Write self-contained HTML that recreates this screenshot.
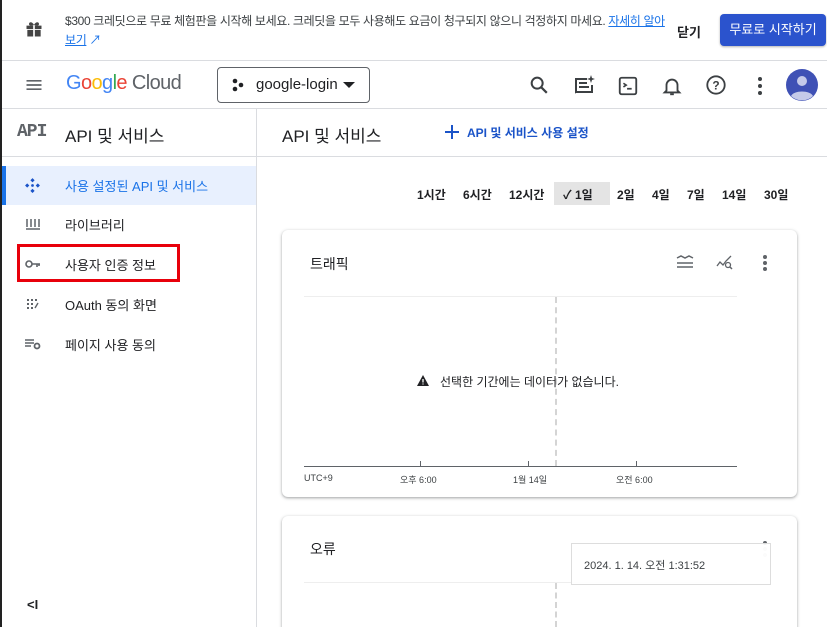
<!DOCTYPE html>
<html style="overflow:hidden;width:827px;height:627px"><head><meta charset="utf-8"><style>
*{box-sizing:border-box;margin:0;padding:0}
body{width:827px;height:627px;overflow:hidden;background:#fff;font-family:"Liberation Sans","Noto Sans CJK KR",sans-serif;color:#202124;position:relative}
.a{position:absolute}
.t{white-space:nowrap}
</style></head><body>
<div class="a" style="left:0;top:0;width:2px;height:627px;background:#222"></div>
<!-- banner -->
<svg class="a" style="left:24px;top:19px" width="20" height="20" viewBox="0 0 24 24"><path fill="#444" d="M3 8h18v4H3zM4 13h16v8H4z"/><path fill="#444" d="M12 7c-2-4-6-4-6-1s4 2 6 1zm0 0c2-4 6-4 6-1s-4 2-6 1z"/><path fill="#fff" d="M11 8h2v13h-2z"/></svg>
<div class="a t" style="left:65px;top:12px;font-size:12px;color:#3c4043;line-height:19px;letter-spacing:-0.35px">$300 크레딧으로 무료 체험판을 시작해 보세요. 크레딧을 모두 사용해도 요금이 청구되지 않으니 걱정하지 마세요. <span style="color:#1a73e8;text-decoration:underline">자세히 알아</span><br><span style="color:#1a73e8;text-decoration:underline">보기</span> <span style="color:#1a73e8">↗</span></div>
<div class="a t" style="left:677px;top:22px;font-size:13px;color:#202124;font-weight:bold">닫기</div>
<div class="a t" style="left:720px;top:14px;width:106px;height:32px;background:#2b53cd;border-radius:4px;color:#fff;font-size:13px;line-height:32px;text-align:center;box-shadow:0 1px 2px rgba(0,0,0,.3)">무료로 시작하기</div>
<div class="a" style="left:2px;top:60px;width:825px;height:1px;background:#dadce0"></div>
<!-- header -->
<svg class="a" style="left:24px;top:75px" width="20" height="20" viewBox="0 0 24 24"><path fill="#5f6368" d="M3 6h18v2H3zm0 5h18v2H3zm0 5h18v2H3z"/></svg>
<div class="a t" style="left:66px;top:72px;font-size:20px;letter-spacing:-0.6px"><span style="color:#4285f4">G</span><span style="color:#ea4335">o</span><span style="color:#fbbc05">o</span><span style="color:#4285f4">g</span><span style="color:#34a853">l</span><span style="color:#ea4335">e</span> <span style="color:#5f6368">Cloud</span></div>
<div class="a" style="left:217px;top:67px;width:153px;height:36px;border:1px solid #5f6368;border-radius:4px"></div>
<svg class="a" style="left:231px;top:78px" width="14" height="14" viewBox="0 0 14 14"><circle cx="4" cy="3" r="2.3" fill="#202124"/><circle cx="10" cy="7" r="2.3" fill="#202124"/><circle cx="4" cy="11" r="2.3" fill="#202124"/></svg>
<div class="a t" style="left:256px;top:76px;font-size:15px;color:#202124">google-login</div>
<svg class="a" style="left:342px;top:81px" width="14" height="8"><path d="M1 1h12L7 7z" fill="#202124"/></svg>
<svg class="a" style="left:528px;top:74px" width="22" height="22" viewBox="0 0 24 24"><circle cx="10" cy="10" r="6" stroke="#3c4043" stroke-width="2.2" fill="none"/><path d="M14.5 14.5l6 6" stroke="#3c4043" stroke-width="2.4"/></svg>
<svg class="a" style="left:572px;top:74px" width="24" height="24" viewBox="0 0 24 24"><path d="M3 4h12v2H5v11l-2 3z" fill="#3c4043"/><path d="M3 17h16V11h2v8H3z" fill="#3c4043"/><path d="M7 8h8v2H7zm0 4h10v2H7z" fill="#3c4043"/><path d="M19 1l1 3 3 1-3 1-1 3-1-3-3-1 3-1z" fill="#3c4043"/></svg>
<svg class="a" style="left:617px;top:75px" width="22" height="22" viewBox="0 0 24 24"><rect x="3" y="3" width="18" height="18" rx="2" stroke="#3c4043" stroke-width="2" fill="none"/><path d="M7 9l3 2-3 2M11 15h5" stroke="#3c4043" stroke-width="1.8" fill="none"/></svg>
<svg class="a" style="left:661px;top:74px" width="22" height="24" viewBox="0 0 24 24"><path d="M6 17V11a6 6 0 0112 0v6l2 2H4z" stroke="#3c4043" stroke-width="2" fill="none"/><path d="M10 21h4" stroke="#3c4043" stroke-width="2"/></svg>
<svg class="a" style="left:705px;top:74px" width="22" height="22" viewBox="0 0 24 24"><circle cx="12" cy="12" r="9.5" stroke="#3c4043" stroke-width="2" fill="none"/><text x="12" y="17" text-anchor="middle" font-size="13" font-weight="bold" fill="#3c4043" font-family="Liberation Sans">?</text></svg>
<svg class="a" style="left:756px;top:75px" width="8" height="22"><circle cx="4" cy="4" r="2" fill="#3c4043"/><circle cx="4" cy="11" r="2" fill="#3c4043"/><circle cx="4" cy="18" r="2" fill="#3c4043"/></svg>
<svg class="a" style="left:786px;top:69px" width="32" height="32" viewBox="0 0 32 32"><circle cx="16" cy="16" r="16" fill="#3f51b5"/><circle cx="16" cy="12" r="5" fill="#c5cae9"/><path d="M5 27c3-6 19-6 22 0a16 16 0 01-22 0z" fill="#c5cae9"/></svg>
<div class="a" style="left:2px;top:108px;width:825px;height:1px;background:#dadce0"></div>
<!-- sidebar -->
<div class="a" style="left:256px;top:108px;width:1px;height:519px;background:#dadce0"></div>
<div class="a t" style="left:17px;top:122px;font-size:18px;font-family:'Liberation Mono',monospace;font-weight:bold;color:#5f6368;letter-spacing:-1px">API</div>
<div class="a t" style="left:65px;top:122px;font-size:17px">API 및 서비스</div>
<div class="a" style="left:2px;top:156px;width:255px;height:1px;background:#dadce0"></div>
<div class="a" style="left:2px;top:166px;width:254px;height:39px;background:#e8f0fe"></div>
<div class="a" style="left:2px;top:166px;width:4px;height:39px;background:#1a73e8"></div>
<svg class="a" style="left:24px;top:177px" width="17" height="17" viewBox="0 0 16 16"><path d="M8 1l2 2-2 2-2-2zM8 11l2 2-2 2-2-2zM1 8l2-2 2 2-2 2zM11 8l2-2 2 2-2 2z" fill="#1a53c8"/><circle cx="8" cy="8" r="1.3" fill="#1a53c8"/></svg>
<div class="a t" style="left:65px;top:176px;font-size:13px;color:#1a73e8">사용 설정된 API 및 서비스</div>
<svg class="a" style="left:26px;top:217px" width="14" height="14"><path d="M1 2v8M5 2v8M9 2v8M13 2v8M0 12h14" stroke="#5f6368" stroke-width="1.5"/></svg>
<div class="a t" style="left:65px;top:215px;font-size:13px">라이브러리</div>
<div class="a" style="left:17px;top:244px;width:163px;height:38px;border:3px solid #e8000b"></div>
<svg class="a" style="left:25px;top:259px" width="16" height="10"><circle cx="4" cy="5" r="3" stroke="#5f6368" stroke-width="1.6" fill="none"/><path d="M7 5h8M12 5v3M14 5v2" stroke="#5f6368" stroke-width="1.6"/></svg>
<div class="a t" style="left:65px;top:255px;font-size:13px">사용자 인증 정보</div>
<svg class="a" style="left:26px;top:298px" width="14" height="12"><g fill="#5f6368"><rect x="1" y="1" width="2" height="2"/><rect x="5" y="1" width="2" height="2"/><rect x="9" y="1" width="2" height="2"/><rect x="1" y="5" width="2" height="2"/><rect x="5" y="5" width="2" height="2"/><rect x="1" y="9" width="2" height="2"/><rect x="5" y="9" width="2" height="2"/><path d="M9 10l3-5" stroke="#5f6368" stroke-width="1.4"/></g></svg>
<div class="a t" style="left:65px;top:295px;font-size:13px">OAuth 동의 화면</div>
<svg class="a" style="left:25px;top:338px" width="17" height="12"><path d="M0 2h9M0 5h9M0 8h6" stroke="#5f6368" stroke-width="1.4"/><circle cx="12" cy="8" r="2.5" stroke="#5f6368" stroke-width="1.8" fill="none"/></svg>
<div class="a t" style="left:65px;top:335px;font-size:13px">페이지 사용 동의</div>
<div class="a t" style="left:27px;top:597px;font-size:13px;font-weight:bold;color:#202124">&lt;I</div>
<!-- main -->
<div class="a t" style="left:282px;top:122px;font-size:17px">API 및 서비스</div>
<svg class="a" style="left:444px;top:124px" width="16" height="16"><path d="M8 1v14M1 8h14" stroke="#1a53c8" stroke-width="2"/></svg>
<div class="a t" style="left:467px;top:124px;font-size:12px;color:#1a53c8;font-weight:bold">API 및 서비스 사용 설정</div>
<div class="a" style="left:257px;top:156px;width:570px;height:1px;background:#dadce0"></div>
<div class="a" style="left:554px;top:182px;width:56px;height:23px;background:#e4e4e4"></div>
<div class="a t" style="left:417px;top:186px;font-size:12px;font-weight:bold;color:#202124">
<span style="position:absolute;left:0">1시간</span><span style="position:absolute;left:46px">6시간</span><span style="position:absolute;left:92px">12시간</span><span style="position:absolute;left:146px">✓ 1일</span><span style="position:absolute;left:200px">2일</span><span style="position:absolute;left:235px">4일</span><span style="position:absolute;left:270px">7일</span><span style="position:absolute;left:305px">14일</span><span style="position:absolute;left:347px">30일</span></div>
<!-- card1 -->
<div class="a" style="left:282px;top:230px;width:515px;height:267px;border-radius:6px;box-shadow:0 1px 2px rgba(60,64,67,.35),0 1px 3px 1px rgba(60,64,67,.12)"></div>
<div class="a t" style="left:310px;top:254px;font-size:14px">트래픽</div>
<svg class="a" style="left:676px;top:254px" width="18" height="16"><path d="M1 4l4-2 4 2 4-2 4 2M1 9h16M1 13h16" stroke="#5f6368" stroke-width="1.5" fill="none"/></svg>
<svg class="a" style="left:716px;top:255px" width="18" height="16"><path d="M1 11l3-4 3 3 3-4 5-5" stroke="#5f6368" stroke-width="1.3" fill="none"/><circle cx="12" cy="10" r="2.5" stroke="#5f6368" stroke-width="1.3" fill="none"/><path d="M14 12l2 2" stroke="#5f6368" stroke-width="1.5"/></svg>
<svg class="a" style="left:761px;top:253px" width="8" height="20"><circle cx="4" cy="4" r="2" fill="#5f6368"/><circle cx="4" cy="10" r="2" fill="#5f6368"/><circle cx="4" cy="16" r="2" fill="#5f6368"/></svg>
<div class="a" style="left:304px;top:296px;width:433px;height:1px;background:#eee"></div>
<div class="a" style="left:555px;top:297px;width:0;height:169px;border-left:2px dashed #d4d4d4"></div>
<svg class="a" style="left:416px;top:374px" width="14" height="13"><path d="M7 1L13 12H1z" fill="#202124"/><path d="M7 5v3.5M7 9.5v1" stroke="#fff" stroke-width="1.3"/></svg>
<div class="a t" style="left:440px;top:373px;font-size:12px">선택한 기간에는 데이터가 없습니다.</div>
<div class="a" style="left:304px;top:466px;width:433px;height:1px;background:#5f6368"></div>
<div class="a" style="left:420px;top:461px;width:1px;height:5px;background:#5f6368"></div>
<div class="a" style="left:528px;top:461px;width:1px;height:5px;background:#5f6368"></div>
<div class="a" style="left:636px;top:461px;width:1px;height:5px;background:#5f6368"></div>
<div class="a t" style="left:304px;top:473px;font-size:9px;color:#3c4043">UTC+9</div>
<div class="a t" style="left:400px;top:473px;font-size:9px;color:#3c4043">오후 6:00</div>
<div class="a t" style="left:513px;top:473px;font-size:9px;color:#3c4043">1월 14일</div>
<div class="a t" style="left:616px;top:473px;font-size:9px;color:#3c4043">오전 6:00</div>
<!-- card2 -->
<div class="a" style="left:282px;top:516px;width:515px;height:120px;border-radius:6px;box-shadow:0 1px 2px rgba(60,64,67,.35),0 1px 3px 1px rgba(60,64,67,.12)"></div>
<div class="a t" style="left:310px;top:539px;font-size:14px">오류</div>
<div class="a" style="left:304px;top:582px;width:433px;height:1px;background:#eee"></div>
<div class="a" style="left:555px;top:583px;width:0;height:44px;border-left:2px dashed #d4d4d4"></div>
<svg class="a" style="left:761px;top:539px" width="8" height="20"><circle cx="4" cy="4" r="2" fill="#5f6368"/><circle cx="4" cy="10" r="2" fill="#ccc"/><circle cx="4" cy="16" r="2" fill="#ccc"/></svg>
<div class="a" style="left:571px;top:543px;width:200px;height:42px;background:rgba(255,255,255,.92);border:1px solid #ddd"></div>
<div class="a t" style="left:584px;top:557px;font-size:11px;color:#3c4043">2024. 1. 14. 오전 1:31:52</div>
</body></html>
